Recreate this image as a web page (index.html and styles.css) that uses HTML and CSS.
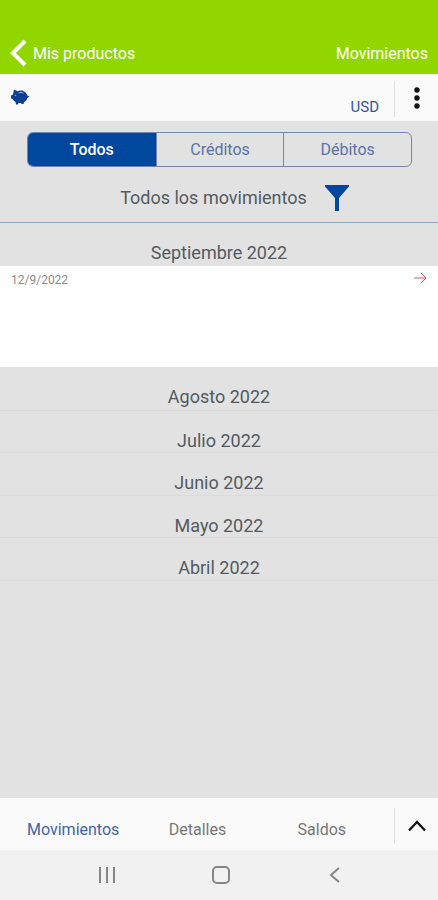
FILE: index.html
```html
<!DOCTYPE html>
<html lang="es">
<head>
<meta charset="utf-8">
<meta name="viewport" content="width=device-width, initial-scale=1">
<title>Movimientos</title>
<link rel="stylesheet" href="styles.css">
</head>
<body>
<header class="top">
  <a class="back" href="#productos">
    <svg width="18" height="28" viewBox="0 0 18 28" aria-hidden="true"><path d="M15 2 3 14l12 12" fill="none" stroke="#fff" stroke-width="4"/></svg>
    Mis productos
  </a>
  <h1 class="title">Movimientos</h1>
</header>
<section class="account">
  <svg class="pig" width="20" height="18" viewBox="0 0 20 18" aria-hidden="true">
    <path d="M4 1.500 7.500 3.200C10 2 13.500 2 15.500 4.500 16.500 5.500 17 6.500 17.200 7.500L19.500 8.500 17.200 10C17 12 15.500 13.500 14 14.200L13.500 16H11.500L11 15H8.500L7.800 16.500H6L5.500 14C4 13 3 12 2.500 11L1 10.500V7.500L3 6.500Z" fill="#0b3f94"/>
    <path d="M8.500 5c1.500-.7 3.500-.6 5 .2" fill="none" stroke="#9fc0e6" stroke-width="1"/>
    <circle cx="5.500" cy="7.500" r=".8" fill="#7fa5d6"/>
  </svg>
  <span class="currency">USD</span>
  <button class="side" type="button" aria-label="Más opciones">
    <svg width="6" height="24" viewBox="0 0 6 24" aria-hidden="true"><g fill="#111"><circle cx="3" cy="3" r="2.700"/><circle cx="3" cy="11" r="2.700"/><circle cx="3" cy="19" r="2.700"/></g></svg>
  </button>
</section>
<main class="content">
  <div class="segments">
    <button class="segment active" type="button">Todos</button>
    <button class="segment" type="button">Créditos</button>
    <button class="segment" type="button">Débitos</button>
  </div>
  <div class="filter">
    <span>Todos los movimientos</span>
    <button class="plain" type="button" aria-label="Filtrar">
      <svg width="24" height="26" viewBox="0 0 24 26" aria-hidden="true"><path d="M0 0h24v1.500L14 13V26h-4V13L0 1.500z" fill="#00479d"/></svg>
    </button>
  </div>
  <h2 class="month current">Septiembre 2022</h2>
  <article class="movement">
    <time datetime="2022-09-12">12/9/2022</time>
    <svg width="13" height="12" viewBox="0 0 13 12" aria-hidden="true"><path d="M0 6h12M7 1l5 5-5 5" fill="none" stroke="#e0525c" stroke-width="1"/></svg>
  </article>
  <h2 class="month">Agosto 2022</h2>
  <h2 class="month">Julio 2022</h2>
  <h2 class="month">Junio 2022</h2>
  <h2 class="month">Mayo 2022</h2>
  <h2 class="month">Abril 2022</h2>
</main>
<nav class="tabs">
  <div class="links">
    <a class="tab selected" href="#movimientos">Movimientos</a>
    <a class="tab" href="#detalles">Detalles</a>
    <a class="tab" href="#saldos">Saldos</a>
  </div>
  <button class="side" type="button" aria-label="Expandir">
    <svg width="18" height="12" viewBox="0 0 18 12" aria-hidden="true"><path d="M1 10.500 9 2l8 8.500" fill="none" stroke="#111" stroke-width="2.300"/></svg>
  </button>
</nav>
<div class="system">
  <button class="plain" type="button" aria-label="Recientes"><svg width="18" height="18" viewBox="0 0 18 18" aria-hidden="true"><path d="M2 1v16M9 1v16M16 1v16" stroke="#858585" stroke-width="2"/></svg></button>
  <button class="plain" type="button" aria-label="Inicio"><svg width="18" height="18" viewBox="0 0 18 18" aria-hidden="true"><rect x="1" y="1" width="16" height="16" rx="4" fill="none" stroke="#858585" stroke-width="2"/></svg></button>
  <button class="plain" type="button" aria-label="Atrás"><svg width="18" height="18" viewBox="0 0 18 18" aria-hidden="true"><path d="M13 2 5 9l8 7" fill="none" stroke="#858585" stroke-width="2"/></svg></button>
</div>
</body>
</html>
```

FILE: styles.css
```css
* {
  box-sizing: border-box;
}

body {
  margin: 0;
  min-height: 100vh;
  display: flex;
  flex-direction: column;
  background: #e2e2e2;
  color: #535a61;
  font-family: Roboto, "Liberation Sans", sans-serif;
  font-size: 16px;
}

h1,
h2 {
  margin: 0;
  font-size: inherit;
  font-weight: 400;
}

a {
  color: inherit;
  text-decoration: none;
}

button {
  margin: 0;
  padding: 0;
  border: 0;
  background: none;
  color: inherit;
  font: inherit;
}

svg {
  display: block;
}

.top {
  display: flex;
  justify-content: space-between;
  align-items: center;
  padding: 39px 10px 7px;
  background: #92d600;
  color: #fff;
}

.back {
  display: flex;
  align-items: center;
  gap: 5px;
}

.account {
  display: flex;
  height: 47px;
  padding: 7px 0 4px;
  background: #fafafa;
}

.pig {
  margin: 7px auto 0 10px;
}

.currency {
  align-self: flex-end;
  margin-right: 15px;
  color: #31549a;
  font-size: 15px;
  line-height: 20px;
}

.side {
  display: grid;
  place-items: center;
  width: 44px;
  border-left: 1px solid #e2e2e2;
}

.content {
  flex: 1;
}

.segments {
  display: grid;
  grid-template-columns: repeat(3, 1fr);
  margin: 11px 26px 0 27px;
  border: 1px solid #7484b4;
  border-radius: 6px;
  overflow: hidden;
}

.segment {
  height: 33px;
  color: #5873ad;
}

.segment + .segment {
  border-left: 1px solid #7484b4;
}

.segment.active {
  background: #00479d;
  color: #fff;
  font-weight: 500;
}

.filter {
  display: flex;
  justify-content: center;
  align-items: center;
  gap: 18px;
  height: 56px;
  padding: 6px 0 0 31px;
  border-bottom: 1px solid #86a9c0;
  font-size: 18px;
}

.month {
  height: 43px;
  padding-top: 18px;
  border-bottom: 1px solid #dadcdc;
  font-size: 18px;
  line-height: 24px;
  text-align: center;
}

.month:nth-of-type(odd) {
  height: 42px;
}

.month.current {
  height: 43px;
  border-bottom: 0;
}

.month.current + .movement + .month {
  height: 44px;
}

.movement {
  display: flex;
  justify-content: space-between;
  height: 101px;
  padding: 6px 11px;
  background: #fff;
  color: #8c8c8c;
  font-size: 12px;
  line-height: 16px;
}

.tabs {
  display: flex;
  height: 52px;
  padding: 10px 0 6px;
  background: #fafafa;
  color: #777;
}

.links {
  flex: 1;
  display: grid;
  grid-template-columns: repeat(3, 1fr);
  align-items: center;
  padding: 6px 10px 0 11px;
  text-align: center;
}

.selected {
  color: #3f65a8;
}

.system {
  display: flex;
  justify-content: space-between;
  align-items: center;
  height: 50px;
  padding: 0 94px 0 98px;
  background: #f1f1f1;
}
```
